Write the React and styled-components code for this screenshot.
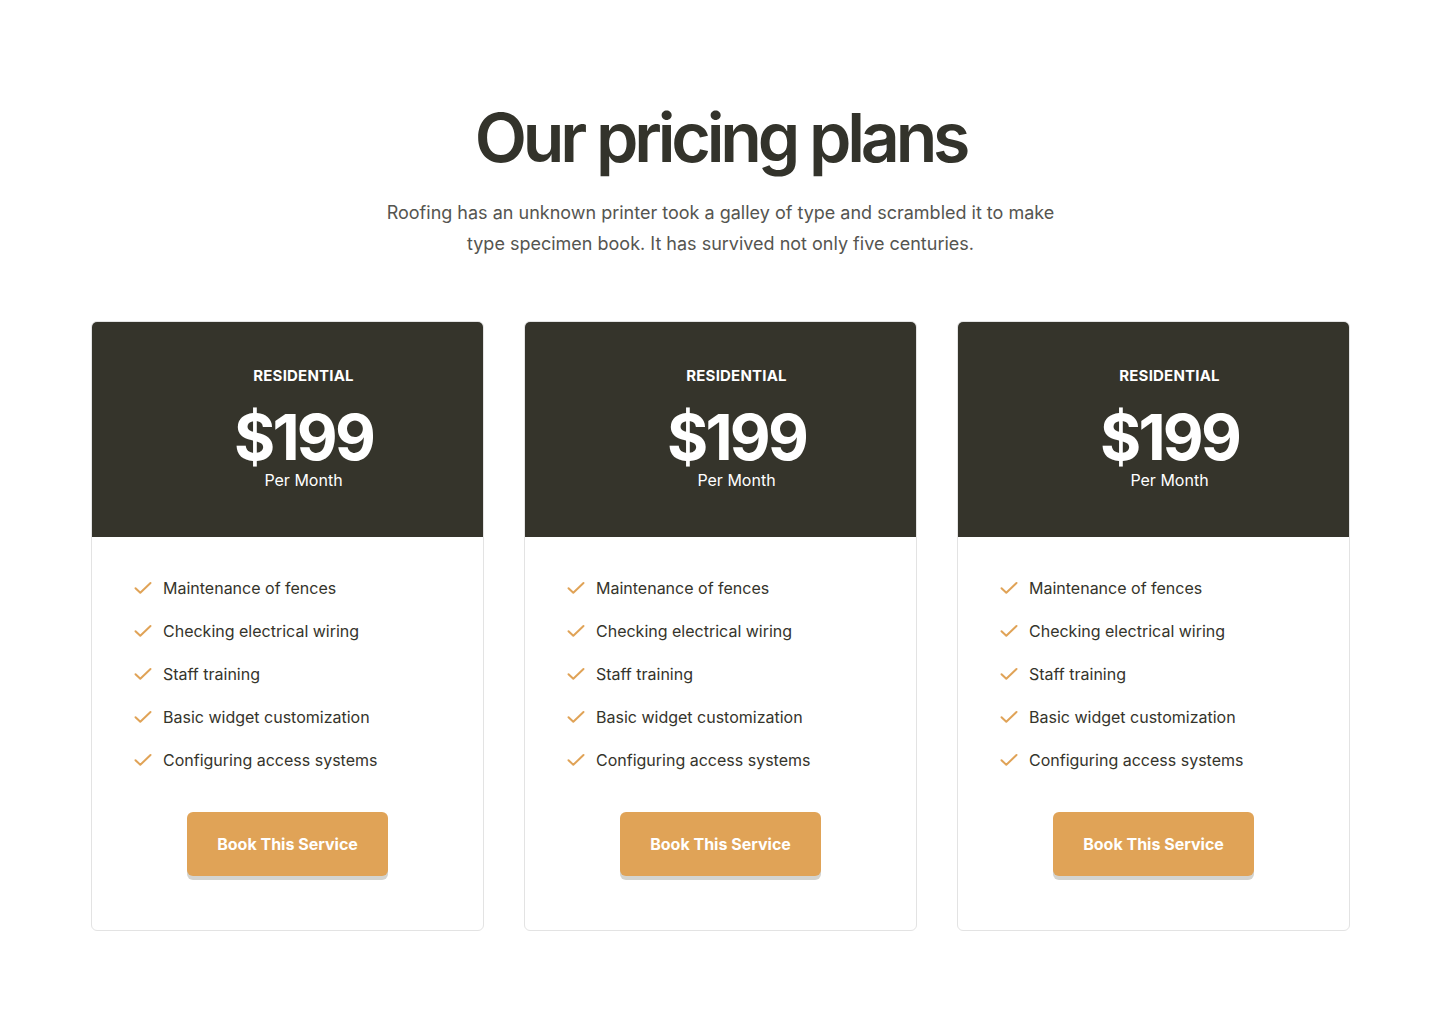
import React from 'react';
import styled, { createGlobalStyle } from 'styled-components';

const GlobalStyle = createGlobalStyle`
  body {
    margin: 0;
    background: #fff;
    font-family: Inter, "Noto Sans", sans-serif;
  }
`;

const features = [
  'Maintenance of fences',
  'Checking electrical wiring',
  'Staff training',
  'Basic widget customization',
  'Configuring access systems',
];

const plans = [
  { name: 'RESIDENTIAL', price: '$199', period: 'Per Month' },
  { name: 'RESIDENTIAL', price: '$199', period: 'Per Month' },
  { name: 'RESIDENTIAL', price: '$199', period: 'Per Month' },
];

const Check = () => (
  <svg width="18" height="14" viewBox="0 0 18 14" fill="none">
    <path d="M1.5 7.2 L6.3 11.8 L16.5 2" stroke="#e0a357" strokeWidth="2" strokeLinecap="round" strokeLinejoin="round" />
  </svg>
);

const App = () => {
  return (
    <Section>
      <GlobalStyle />
      <Title>Our pricing plans</Title>
      <Lead>
        Roofing has an unknown printer took a galley of type and scrambled it to make
        type specimen book. It has survived not only five centuries.
      </Lead>
      <Grid>
        {plans.map((plan, i) => (
          <Card key={i}>
            <CardHead>
              <PlanName>{plan.name}</PlanName>
              <Price>{plan.price}</Price>
              <Period>{plan.period}</Period>
            </CardHead>
            <CardBody>
              <List>
                {features.map((f) => (
                  <Item key={f}>
                    <Check />
                    <span>{f}</span>
                  </Item>
                ))}
              </List>
              <Button>Book This Service</Button>
            </CardBody>
          </Card>
        ))}
      </Grid>
    </Section>
  );
};

const Section = styled.section`
  display: flex;
  flex-direction: column;
  align-items: center;
  padding: 97px 90px 98px 91px;
`;

const Title = styled.h2`
  margin: 0;
  font-size: 68px;
  line-height: 80px;
  font-weight: 600;
  letter-spacing: -4.2px;
  color: #33332b;
`;

const Lead = styled.p`
  margin: 20px 0 0;
  max-width: 690px;
  text-align: center;
  font-size: 18px;
  line-height: 31px;
  color: #555550;
`;

const Grid = styled.div`
  margin-top: 62px;
  width: 100%;
  display: grid;
  grid-template-columns: repeat(3, 1fr);
  gap: 40px;
`;

const Card = styled.div`
  border: 1px solid #e3e3e3;
  border-radius: 6px;
  overflow: hidden;
  background: #fff;
`;

const CardHead = styled.div`
  background: #35342b;
  color: #fff;
  height: 216px;
  box-sizing: border-box;
  padding: 46px 0 0 32px;
  display: flex;
  flex-direction: column;
  align-items: center;
  margin: -1px -1px 0;
`;

const PlanName = styled.div`
  font-size: 15px;
  font-weight: 700;
  line-height: 18px;
  letter-spacing: 0.2px;
`;

const Price = styled.div`
  margin-top: 20px;
  font-size: 63px;
  font-weight: 700;
  line-height: 64px;
  letter-spacing: -2.8px;
`;

const Period = styled.div`
  margin-top: 1px;
  font-size: 16px;
  line-height: 20px;
`;

const CardBody = styled.div`
  padding: 40px 42px 54px;
  display: flex;
  flex-direction: column;
`;

const List = styled.ul`
  list-style: none;
  margin: 0;
  padding: 0;
  display: flex;
  flex-direction: column;
  gap: 21px;
`;

const Item = styled.li`
  display: flex;
  align-items: center;
  gap: 11px;
  font-size: 16px;
  line-height: 22px;
  color: #35342b;
`;

const Button = styled.button`
  align-self: center;
  margin-top: 41px;
  width: 201px;
  height: 64px;
  border: 0;
  border-radius: 6px;
  background: #e0a357;
  box-shadow: 0 4px 0 #d4d4d0;
  color: #fff;
  font-family: Inter, sans-serif;
  font-size: 16px;
  font-weight: 700;
  cursor: pointer;
`;

export default App;
